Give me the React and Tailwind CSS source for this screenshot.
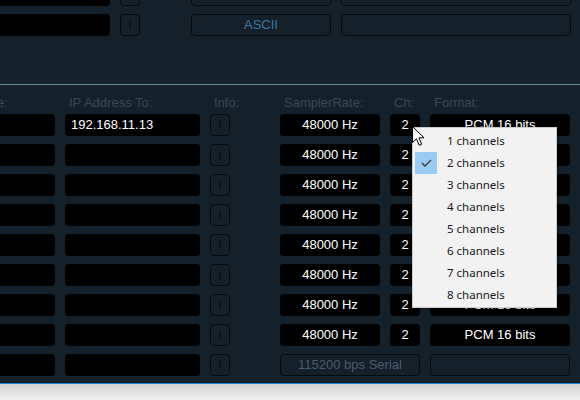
import React from 'react';

const SANS = { fontFamily: '"Liberation Sans", Arial, sans-serif' };

const channels = [1, 2, 3, 4, 5, 6, 7, 8];

// Black value field
const Field = ({ className = '', children, left }) => (
  <div
    className={`h-[22px] shrink-0 rounded-[4px] bg-black text-[13px] leading-[22px] text-white ${
      left ? 'pl-[6px] text-left' : 'text-center'
    } ${className}`}
  >
    {children}
  </div>
);

// Outlined box on page colour
const Outline = ({ className = '', children }) => (
  <div
    className={`h-[22px] shrink-0 rounded-[4px] border border-[#050a0d] text-center text-[13px] leading-[20px] ${className}`}
  >
    {children}
  </div>
);

const InfoButton = () => (
  <Outline className="w-[20px] text-[#05090c]">i</Outline>
);

const Row = ({ ip, last }) => (
  <div className="flex h-[22px] items-center">
    <Field className="ml-[-80px] w-[135px]" />
    <Field left className="ml-[10px] w-[135px]">
      {ip}
    </Field>
    <div className="ml-[10px]">
      <InfoButton />
    </div>
    {last ? (
      <>
        <Outline className="ml-[50px] w-[140px] text-[#4a5b6a]">115200 bps Serial</Outline>
        <Outline className="ml-[10px] w-[140px]" />
      </>
    ) : (
      <>
        <Field className="ml-[50px] w-[100px]">48000 Hz</Field>
        <Field className="ml-[10px] w-[30px]">2</Field>
        <Field className="ml-[10px] w-[140px]">PCM 16 bits</Field>
      </>
    )}
  </div>
);

const TopRow = ({ ascii }) => (
  <div className="flex h-[22px] items-center">
    <Field className="ml-[-40px] w-[150px]" />
    <div className="ml-[10px]">
      <InfoButton />
    </div>
    <Outline className="ml-[51px] w-[140px] text-[#3f74a1]">{ascii}</Outline>
    <Outline className="ml-[10px] w-[230px]" />
  </div>
);

const Label = ({ className = '', children }) => (
  <div className={`shrink-0 pl-[4px] text-[13px] leading-[15px] text-[#3a4855] whitespace-nowrap ${className}`}>
    {children}
  </div>
);

const ChannelMenu = () => (
  <div
    className="absolute left-[412px] top-[127px] w-[145px] border border-[#cccccc] bg-[#f2f2f2] pb-[1px] pt-[2px] shadow-[2px_2px_3px_rgba(0,0,0,0.25)]"
    style={{ fontFamily: '"Noto Sans", "Open Sans", sans-serif' }}
  >
    {channels.map((n) => (
      <div key={n} className="flex h-[22px] items-center">
        <div
          className={`ml-[2px] flex h-[22px] w-[22px] items-center justify-center ${
            n === 2 ? 'bg-[#99cbf3]' : ''
          }`}
        >
          {n === 2 && (
            <svg width="11" height="8" viewBox="0 0 11 8">
              <polyline points="1,4 4,7 10,1" fill="none" stroke="#3c3c3c" strokeWidth="1.4" />
            </svg>
          )}
        </div>
        <span className="ml-[10px] text-[11.5px] text-[#1a1a1a]">{n} channels</span>
      </div>
    ))}
  </div>
);

const Cursor = () => (
  <svg
    className="absolute left-[412px] top-[126px]"
    width="14"
    height="21"
    viewBox="0 0 14 21"
  >
    <path
      d="M0.5 0.5 L0.5 16.5 L4.5 12.8 L7.2 19.3 L9.6 18.3 L7 11.8 L12 11.8 Z"
      fill="#ffffff"
      stroke="#000000"
      strokeWidth="1"
      strokeLinejoin="round"
    />
  </svg>
);

export default function App() {
  const rows = Array.from({ length: 9 }, (_, i) => i);

  return (
    <div className="relative h-[400px] w-[580px] overflow-hidden bg-[#14212b]" style={SANS}>
      {/* Upper panel, scrolled so that its first row is cut off */}
      <div className="h-[84px] overflow-hidden">
        <div className="mt-[-16px] flex flex-col gap-2">
          <TopRow ascii="" />
          <TopRow ascii="ASCII" />
        </div>
      </div>
      <div className="h-px bg-[#6f8ca1]" />

      {/* Stream table */}
      <div className="flex h-[29px] pt-[10px]">
        <Label className="ml-[-80px] w-[145px]">Stream Name:</Label>
        <Label className="w-[145px]">IP Address To:</Label>
        <Label className="w-[70px]">Info:</Label>
        <Label className="w-[110px]">SamplerRate:</Label>
        <Label className="w-[40px]">Ch:</Label>
        <Label>Format:</Label>
      </div>
      <div className="flex flex-col gap-2">
        {rows.map((i) => (
          <Row key={i} ip={i === 0 ? '192.168.11.13' : ''} last={i === 8} />
        ))}
      </div>

      {/* Window bottom edge */}
      <div className="absolute bottom-0 left-0 right-0 h-[17px] border-t border-[#1a86d9] bg-gradient-to-b from-[#d3d3d3] to-[#f0f0f0]" />

      <ChannelMenu />
      <Cursor />
    </div>
  );
}
